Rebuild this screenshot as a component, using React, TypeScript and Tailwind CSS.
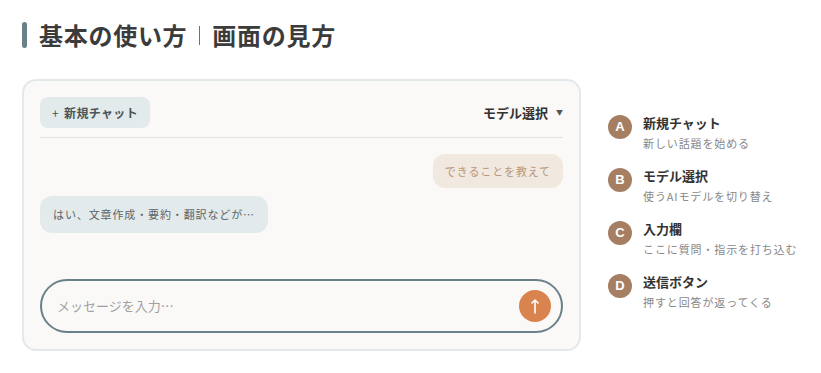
import React from "react";

const font = { fontFamily: '"Noto Sans CJK JP", "Noto Sans", sans-serif' };

const items = [
  { l: "A", t: "新規チャット", s: "新しい話題を始める" },
  { l: "B", t: "モデル選択", s: "使うAIモデルを切り替え" },
  { l: "C", t: "入力欄", s: "ここに質問・指示を打ち込む" },
  { l: "D", t: "送信ボタン", s: "押すと回答が返ってくる" },
];

export default function App() {
  return (
    <div className="w-[821px] h-[373px] bg-white overflow-hidden" style={font}>
      <div className="pl-[22px] pt-[20px]">
        <div className="flex items-center h-[30px]">
          <div className="w-[5px] h-[26px] rounded-full bg-[#6b8189]" />
          <h1 className="ml-[12px] text-[24px] leading-[30px] font-bold text-[#3b3b3b] tracking-[0.03em] flex items-center">
            基本の使い方
            <span className="mx-[12px] inline-block w-px h-[19px] bg-[#8e5c8a]" />
            画面の見方
          </h1>
        </div>
        <div className="flex mt-[29px]">
          <div className="w-[559px] h-[272px] border-2 border-[#e3e9ea] rounded-[14px] bg-[#faf9f7] p-[16px] flex flex-col">
            <div className="flex items-center justify-between h-[31px]">
              <div className="h-[31px] px-[12px] rounded-[8px] bg-[#e3eaeb] flex items-center text-[12px] font-bold text-[#4a5558] tracking-[0.03em]">
                <span className="mr-[5px] font-normal">+</span>新規チャット
              </div>
              <div className="flex items-center text-[13px] font-bold text-[#333]">
                モデル選択
                <span className="ml-[8px] text-[7px] text-[#555]">▼</span>
              </div>
            </div>
            <div className="mt-[9px] h-px bg-[#e2e2e0]" />
            <div className="flex justify-end mt-[16px]">
              <div className="h-[34px] px-[12px] rounded-[12px] bg-[#f1e8df] flex items-center text-[11px] text-[#b8977c] tracking-[0.08em]">
                できることを教えて
              </div>
            </div>
            <div className="flex mt-[8px]">
              <div className="h-[37px] px-[13px] rounded-[12px] bg-[#e3eaeb] flex items-center text-[11px] text-[#5c6568] tracking-[0.08em]">
                はい、文章作成・要約・翻訳などが…
              </div>
            </div>
            <div className="flex-1" />
            <div className="h-[54px] border-2 border-[#6b8189] rounded-[27px] flex items-center justify-between pl-[15px] pr-[10px]">
              <span className="text-[13px] text-[#a0a0a0]">メッセージを入力…</span>
              <div className="w-[32px] h-[32px] rounded-full bg-[#d9834f] flex items-center justify-center">
                <svg width="10" height="16" viewBox="0 0 10 16">
                  <path d="M5 15V2M2 5l3-3 3 3" stroke="#fff" strokeWidth="1.6" fill="none" strokeLinecap="round" strokeLinejoin="round" />
                </svg>
              </div>
            </div>
          </div>
          <div className="ml-[27px] pt-[35px] flex flex-col gap-[15px]">
            {items.map((it) => (
              <div key={it.l} className="flex items-start">
                <div className="w-[24px] h-[24px] rounded-full bg-[#a67f63] text-white text-[13px] font-bold flex items-center justify-center mt-[1px]" style={{ fontFamily: '"Liberation Sans", Arial, sans-serif' }}>
                  {it.l}
                </div>
                <div className="ml-[11px]">
                  <div className="text-[13px] leading-[18px] font-bold text-[#333]">{it.t}</div>
                  <div className="text-[11px] leading-[18px] mt-[2px] text-[#888] tracking-[0.08em]">{it.s}</div>
                </div>
              </div>
            ))}
          </div>
        </div>
      </div>
    </div>
  );
}
